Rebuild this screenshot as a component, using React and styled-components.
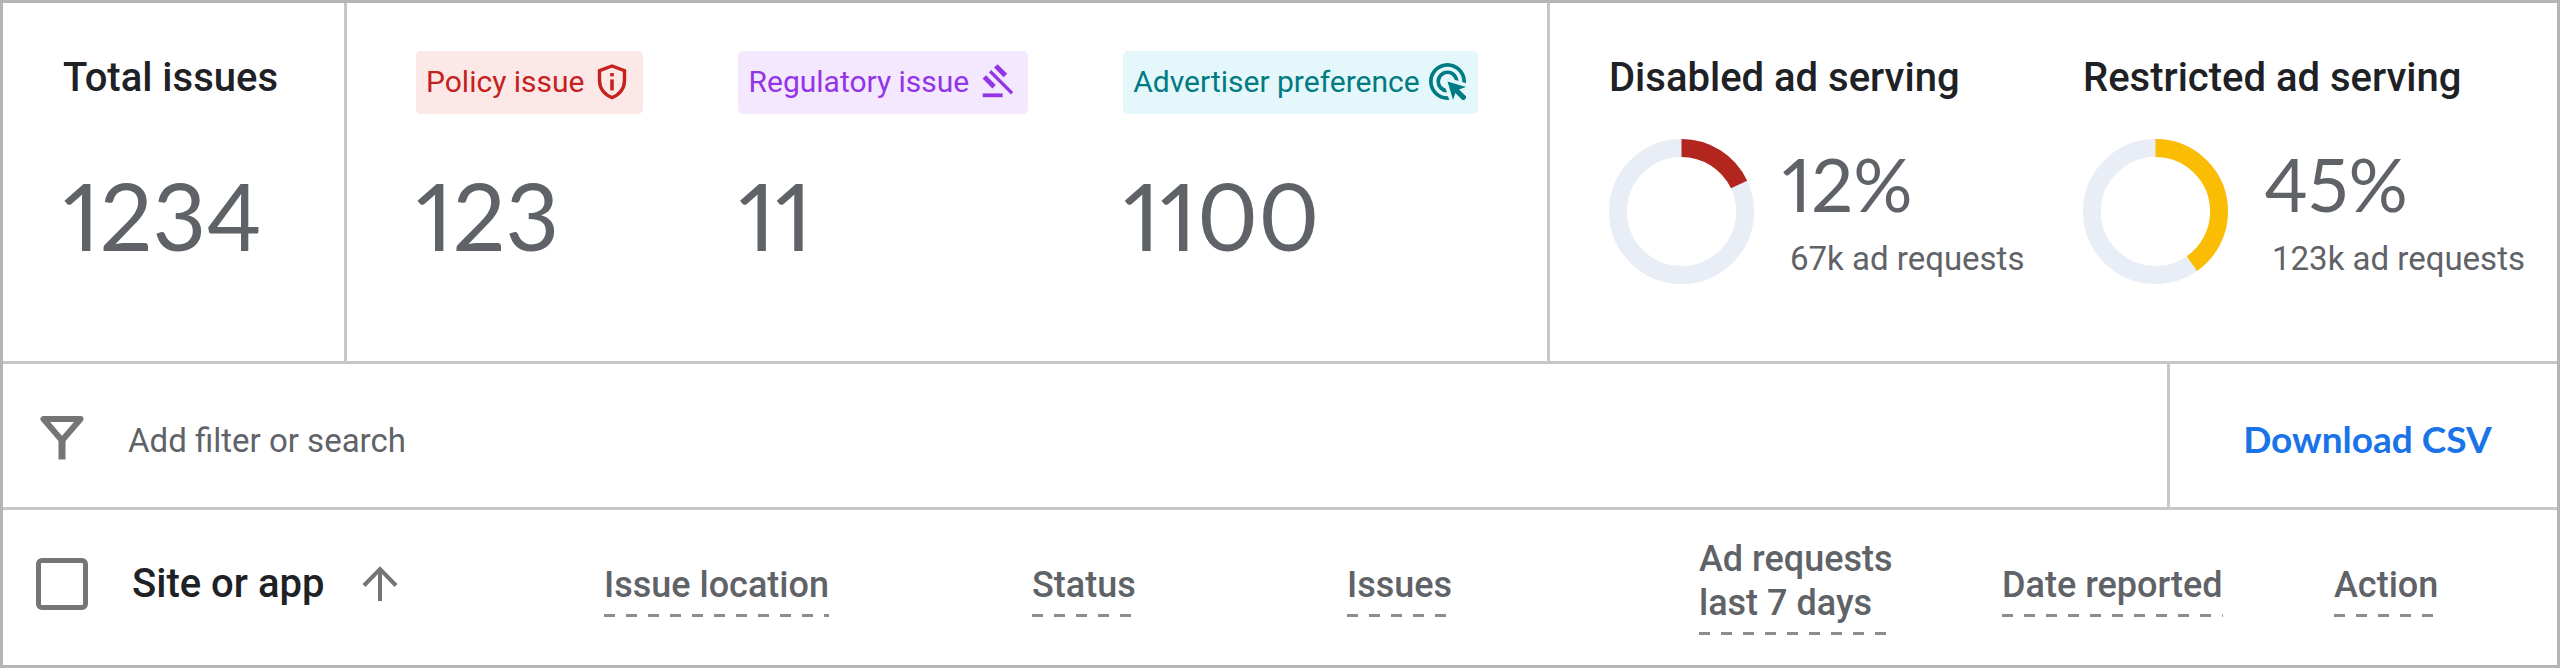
import React from 'react';
import styled, { createGlobalStyle } from 'styled-components';
import { MdAdsClick } from 'react-icons/md';

const chips = [
    { label: 'Policy issue', count: '123', color: '#c5221f', background: '#fce8e6', icon: <ShieldIcon /> },
    { label: 'Regulatory issue', count: '11', color: '#9334e6', background: '#f3e8fd', icon: <GavelIcon /> },
    { label: 'Advertiser preference', count: '1100', color: '#007b83', background: '#e4f7fb', icon: <MdAdsClick size={37} viewBox="2 2 20 20" /> },
];

// share is the part of the ring that is filled
const metrics = [
    { title: 'Disabled ad serving', percent: '12%', requests: '67k ad requests', share: 18, gap: 28, color: '#b3261e' },
    { title: 'Restricted ad serving', percent: '45%', requests: '123k ad requests', share: 40.3, gap: 36, color: '#fbbc04' },
];

const columns = [
    { label: 'Issue location', width: 428 },
    { label: 'Status', width: 315 },
    { label: 'Issues', width: 352 },
    { label: 'Ad requests\nlast 7 days', width: 303, tall: true },
    { label: 'Date reported', width: 332 },
    { label: 'Action', width: 223 },
];

const App = () => {
    return (
        <>
            <GlobalStyle />
            <Container>
                <Summary>
                    <TotalPanel>
                        <Title>Total issues</Title>
                        <Count>1234</Count>
                    </TotalPanel>
                    <IssuesPanel>
                        {chips.map((chip) => (
                            <div key={chip.label}>
                                <Chip $color={chip.color} $background={chip.background}>
                                    <span>{chip.label}</span>
                                    {chip.icon}
                                </Chip>
                                <Count>{chip.count}</Count>
                            </div>
                        ))}
                    </IssuesPanel>
                    <ServingPanel>
                        {metrics.map((metric) => (
                            <div key={metric.title}>
                                <Title>{metric.title}</Title>
                                <Metric $gap={metric.gap}>
                                    <Ring share={metric.share} color={metric.color} />
                                    <MetricText>
                                        <Percent>{metric.percent}</Percent>
                                        <Requests>{metric.requests}</Requests>
                                    </MetricText>
                                </Metric>
                            </div>
                        ))}
                    </ServingPanel>
                </Summary>

                <Toolbar>
                    <Search>
                        <FilterIcon />
                        <SearchInput type="text" placeholder="Add filter or search" />
                    </Search>
                    <DownloadButton type="button">Download CSV</DownloadButton>
                </Toolbar>

                <Table>
                    <colgroup>
                        <Col $width={129} />
                        <Col $width={472} />
                        {columns.map((column) => (
                            <Col key={column.label} $width={column.width} />
                        ))}
                    </colgroup>
                    <thead>
                        <tr>
                            <LeadCell>
                                <Checkbox type="checkbox" aria-label="Select all" />
                            </LeadCell>
                            <LeadCell>
                                <SortButton type="button">
                                    Site or app
                                    <ArrowIcon />
                                </SortButton>
                            </LeadCell>
                            {columns.map((column) => (
                                <HeadCell key={column.label} $tall={column.tall}>
                                    <HeadLabel>{column.label}</HeadLabel>
                                </HeadCell>
                            ))}
                        </tr>
                    </thead>
                </Table>
            </Container>
        </>
    )
}

export default App;

function ShieldIcon() {
    return (
        <svg width="38" height="36" viewBox="-4 0 38 36" fill="none" aria-hidden="true">
            <path d="M15 2 L27.5 6.6 V16.5 C27.5 24.5 22.5 31 15 33.6 C7.5 31 2.5 24.5 2.5 16.5 V6.6 Z" stroke="currentColor" strokeWidth="3.4" />
            <rect x="13.2" y="9" width="3.6" height="3.4" fill="currentColor" />
            <rect x="13.2" y="15.4" width="3.6" height="11" fill="currentColor" />
        </svg>
    )
}

function GavelIcon() {
    return (
        <svg width="38" height="36" viewBox="-4 0 38 36" fill="currentColor" aria-hidden="true">
            <path d="M15.6 .2 L25.2 9.8 L21.6 13.2 L12 3.6 Z" />
            <path d="M4 11.2 L13.8 21 L10.4 24.4 L.6 14.6 Z" />
            <path d="M9.2 6 L31.2 28 L29 30.4 L7 8.4 Z" />
            <rect x=".7" y="29.4" width="20" height="3.8" />
        </svg>
    )
}

function FilterIcon() {
    return (
        <svg width="44" height="44" viewBox="0 0 44 44" fill="none" stroke="#757575" aria-hidden="true">
            <path d="M3.5 3 H40.5 L22 24.5 Z" strokeWidth="6" strokeLinejoin="round" />
            <path d="M22 22 V43.5" strokeWidth="7" />
        </svg>
    )
}

function ArrowIcon() {
    return (
        <svg width="36" height="36" viewBox="0 0 36 36" fill="none" stroke="#757575" strokeWidth="4" aria-hidden="true">
            <path d="M18 35 V4 M2 19.5 L18 3 L34 19.5" />
        </svg>
    )
}

const Ring = ({ share, color }) => (
    <svg width="145" height="145" viewBox="0 0 146 146" fill="none" strokeWidth="18" aria-hidden="true">
        <circle cx="73" cy="73" r="64" stroke="#e8edf6" />
        <circle cx="73" cy="73" r="64" stroke={color} pathLength="100" strokeDasharray={`${share} 100`} transform="rotate(-90 73 73)" />
    </svg>
)

const GlobalStyle = createGlobalStyle`
    *{
        box-sizing: border-box;
    }

    body{
        margin: 0;
        background-color: white;
        font-family: Roboto, sans-serif;
    }

    svg{
        display: block;
        flex-shrink: 0;
    }
`

const Container = styled.div`
    min-height: 100vh;
    border: 3px solid #b3b5b7;
    color: #5f6368;
`

const Summary = styled.div`
    display: grid;
    grid-template-columns: 344fr 1203fr 1007fr;
    min-height: 361px;
    border-bottom: 3px solid #c6c7c9;
`

const Panel = styled.section`
    padding-top: 48px;
    white-space: nowrap;
`

const TotalPanel = styled(Panel)`
    padding-left: 60px;
    border-right: 3px solid #c6c7c9;
`

const IssuesPanel = styled(Panel)`
    display: flex;
    gap: 95px;
    padding-left: 69px;
    border-right: 3px solid #c6c7c9;
`

const ServingPanel = styled(Panel)`
    display: grid;
    grid-template-columns: 474fr 474fr;
    padding-left: 59px;
`

const Title = styled.h2`
    margin: 0;
    min-height: 64px;
    font-size: 40px;
    font-weight: 500;
    line-height: 54px;
    color: #202124;
`

const Count = styled.p`
    margin: 48px 0 0;
    font-family: Lato, sans-serif;
    font-size: 93px;
    font-variant-numeric: proportional-nums;
    line-height: 104px;
`

const Chip = styled.div`
    display: flex;
    align-items: center;
    gap: 9px;
    width: fit-content;
    height: 63px;
    padding: 0 12px 2px 10px;
    margin-bottom: 49px;
    border-radius: 5px;
    background-color: ${(props) => props.$background};
    color: ${(props) => props.$color};
    font-size: 30px;
    line-height: 40px;
`

const Metric = styled.div`
    display: flex;
    gap: ${(props) => props.$gap}px;
    margin-top: 24px;
`

const MetricText = styled.div`
    padding-top: 12px;
`

const Percent = styled.p`
    margin: 0;
    font-family: Lato, sans-serif;
    font-size: 74px;
    font-variant-numeric: proportional-nums;
    line-height: 66px;
`

const Requests = styled.p`
    margin: 20px 0 0;
    padding-left: 8px;
    font-size: 33px;
    line-height: 44px;
`

const Toolbar = styled.div`
    display: flex;
    height: 146px;
    border-bottom: 3px solid #c6c7c9;
`

const Search = styled.label`
    flex: 1;
    display: flex;
    align-items: center;
    gap: 44px;
    padding: 4px 0 0 37px;
`

const SearchInput = styled.input`
    flex: 1;
    height: 60px;
    padding: 6px 0 0;
    border: none;
    outline: none;
    background: none;
    font-family: Roboto, sans-serif;
    font-size: 33px;

    &::placeholder{
        color: #5f6368;
        opacity: 1;
    }
`

const DownloadButton = styled.button`
    width: 390px;
    padding: 6px 0 0 8px;
    border: none;
    border-left: 3px solid #c6c7c9;
    background: none;
    color: #1a73e8;
    font-family: Lato, sans-serif;
    font-size: 37px;
    font-weight: 700;
    cursor: pointer;
`

const Table = styled.table`
    width: 100%;
    height: 155px;
    table-layout: fixed;
    border-collapse: collapse;
`

const Col = styled.col`
    width: ${(props) => props.$width}px;
`

const HeadCell = styled.th`
    padding: ${(props) => (props.$tall ? '0 0 4px' : '4px 0 0')};
    text-align: left;
    vertical-align: middle;
`

const LeadCell = styled(HeadCell)`
    padding: 0 0 8px;
`

const HeadLabel = styled.span`
    display: inline-block;
    padding-bottom: 10px;
    background: repeating-linear-gradient(90deg, #8a8d91 0 11px, transparent 11px 22px) bottom / 100% 3px no-repeat;
    font-size: 36px;
    font-weight: 500;
    line-height: 44px;
    white-space: pre;
    vertical-align: middle;
`

const Checkbox = styled.input`
    appearance: none;
    display: block;
    width: 52px;
    height: 52px;
    margin: 0 0 0 33px;
    border: 5px solid #757575;
    border-radius: 6px;
`

const SortButton = styled.button`
    display: flex;
    align-items: center;
    gap: 38px;
    padding: 0;
    border: none;
    background: none;
    color: #202124;
    font-family: Roboto, sans-serif;
    font-size: 40px;
    font-weight: 500;
    line-height: 48px;
    cursor: pointer;
`
